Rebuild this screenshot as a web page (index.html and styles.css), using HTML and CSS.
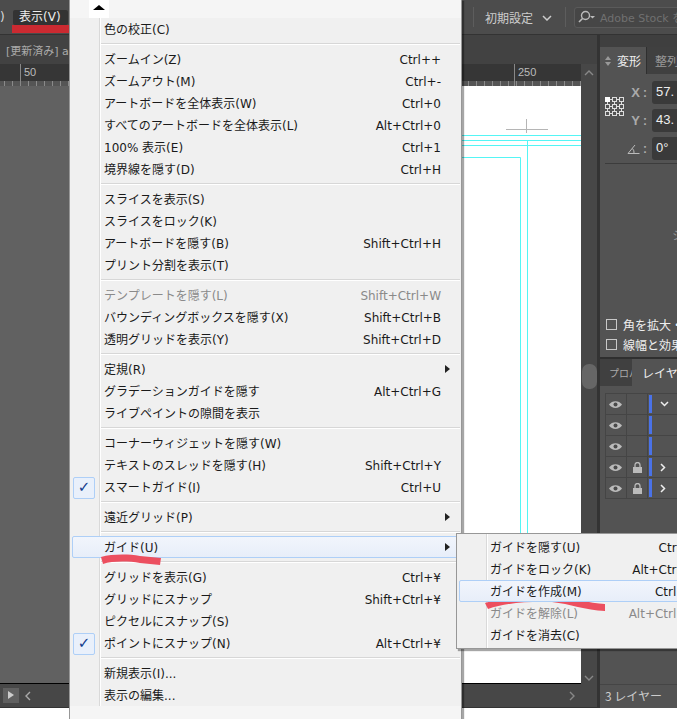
FILE: index.html
```html
<!DOCTYPE html>
<html lang="ja">
<head>
<meta charset="utf-8">
<title>表示メニュー</title>
<link rel="stylesheet" href="styles.css">
</head>
<body>
<div class="app">
  <header class="topbar">
    <span class="prev-menu">)</span>
    <span class="menu-title">表示(V)</span>
    <div class="top-right">
      <span class="vsep"></span>
      <span class="workspace">初期設定</span>
      <svg class="ws-chev" width="10" height="6" viewBox="0 0 10 6"><path d="M1 1l4 4 4-4" fill="none" stroke="#ccc" stroke-width="1.5"/></svg>
      <span class="vsep sep2"></span>
      <div class="search">
        <svg width="20" height="14" viewBox="0 0 20 14"><circle cx="7.5" cy="5.5" r="4" fill="none" stroke="#bbb" stroke-width="1.4"/><path d="M4.5 8.5L1 12" stroke="#bbb" stroke-width="1.6"/><path d="M12 6h5l-2.500 2.500z" fill="#bbb"/></svg>
        <span>Adobe Stock を</span>
      </div>
    </div>
  </header>
  <div class="tabbar"><span class="doc-tab">[更新済み] a</span></div>
  <div class="workarea">
    <div class="doc">
      <div class="doc-main">
        <div class="doc-left">
          <div class="ruler"><span class="r50">50</span><span class="r250">250</span></div>
          <div class="canvas">
            <div class="artboard">
              <svg class="guides" width="119" height="598" viewBox="0 0 119 598">
                <path d="M0 49.500H119M0 54.500H119M0 59.500H119M0 71.500H58.500V514M65.500 54.500V514" fill="none" stroke="#55f5f5" stroke-width="1"/>
                <path d="M44 43.500H86M64.500 33V47" fill="none" stroke="#b5b5b5" stroke-width="1"/>
              </svg>
            </div>
          </div>
        </div>
        <div class="vscroll">
          <svg width="10" height="6" viewBox="0 0 10 6"><path d="M1 5l4-4 4 4" fill="none" stroke="#888" stroke-width="1.400"/></svg>
          <span class="thumb"></span>
          <svg width="10" height="6" viewBox="0 0 10 6"><path d="M1 1l4 4 4-4" fill="none" stroke="#888" stroke-width="1.400"/></svg>
        </div>
      </div>
      <div class="hscroll">
        <span class="play"></span>
        <svg width="6" height="10" viewBox="0 0 6 10"><path d="M5 1L1 5l4 4" fill="none" stroke="#aaa" stroke-width="1.400"/></svg>
        <svg class="hs-right" width="6" height="10" viewBox="0 0 6 10"><path d="M1 1l4 4-4 4" fill="none" stroke="#888" stroke-width="1.400"/></svg>
      </div>
    </div>
    <aside class="panels">
      <div class="panel-strip"></div>
      <div class="panel-tabs">
        <span class="ptab active"><svg width="6" height="10" viewBox="0 0 6 10"><path d="M3 0l3 4H0zM3 10L0 6h6z" fill="#999"/></svg>変形</span>
        <span class="ptab dim">整列</span>
      </div>
      <div class="transform">
        <svg class="refpoint" width="19" height="19" viewBox="0 0 19 19">
          <g fill="none" stroke="#ddd"><rect x="7.500" y=".5" width="4" height="4"/><rect x="14.500" y=".5" width="4" height="4"/><rect x=".5" y="7.500" width="4" height="4"/><rect x="7.500" y="7.500" width="4" height="4"/><rect x="14.500" y="7.500" width="4" height="4"/><rect x=".5" y="14.500" width="4" height="4"/><rect x="7.500" y="14.500" width="4" height="4"/><rect x="14.500" y="14.500" width="4" height="4"/><path d="M5 2.500h2M12 2.500h2M5 9.500h2M12 9.500h2M5 16.500h2M12 16.500h2M2.500 5v2M9.500 5v2M16.500 5v2M2.500 12v2M9.500 12v2M16.500 12v2"/></g>
          <rect x="0" y="0" width="5" height="5" fill="#fff"/>
        </svg>
        <div class="fields">
          <div class="field"><label>X</label><i>:</i><span class="input">57.</span></div>
          <div class="field"><label>Y</label><i>:</i><span class="input">43.</span></div>
          <div class="field"><svg width="13" height="10" viewBox="0 0 13 10"><path d="M1 9.500H12.500M1 9.500L8 1M7 9.500a6 6 0 0 0-1.500-5" fill="none" stroke="#bbb"/></svg><i>:</i><span class="input">0°</span></div>
        </div>
      </div>
      <div class="hint"><span>シ</span></div>
      <div class="checks">
        <div class="check"><span class="box"></span>角を拡大・</div>
        <div class="check"><span class="box"></span>線幅と効果</div>
      </div>
      <div class="layer-tabs">
        <span class="ltab">プロパ</span>
        <span class="ltab active">レイヤー</span>
      </div>
      <div class="layers">
        <div class="lrow"><svg class="eye" width="13" height="9" viewBox="0 0 13 9"><path d="M0 4.500C3 0 10 0 13 4.500 10 9 3 9 0 4.500z" fill="#bbb"/><circle cx="6.500" cy="4.500" r="2" fill="#4a4a4a"/></svg><span class="lock-cell"></span><span class="color"></span><svg class="chev" width="9" height="6" viewBox="0 0 9 6"><path d="M1 1l3.500 3.500L8 1" fill="none" stroke="#eee" stroke-width="1.500"/></svg></div>
        <div class="lrow"><svg class="eye" width="13" height="9" viewBox="0 0 13 9"><path d="M0 4.500C3 0 10 0 13 4.500 10 9 3 9 0 4.500z" fill="#bbb"/><circle cx="6.500" cy="4.500" r="2" fill="#4a4a4a"/></svg><span class="lock-cell"></span><span class="color"></span></div>
        <div class="lrow"><svg class="eye" width="13" height="9" viewBox="0 0 13 9"><path d="M0 4.500C3 0 10 0 13 4.500 10 9 3 9 0 4.500z" fill="#bbb"/><circle cx="6.500" cy="4.500" r="2" fill="#4a4a4a"/></svg><span class="lock-cell"></span><span class="color"></span></div>
        <div class="lrow"><svg class="eye" width="13" height="9" viewBox="0 0 13 9"><path d="M0 4.500C3 0 10 0 13 4.500 10 9 3 9 0 4.500z" fill="#bbb"/><circle cx="6.500" cy="4.500" r="2" fill="#4a4a4a"/></svg><span class="lock-cell"><svg width="9" height="11" viewBox="0 0 9 11"><path d="M2 5V3a2.500 2.500 0 0 1 5 0v2" fill="none" stroke="#bbb" stroke-width="1.300"/><rect y="5" width="9" height="6" fill="#bbb"/></svg></span><span class="color"></span><svg class="chev" width="6" height="9" viewBox="0 0 6 9"><path d="M1 1l3.500 3.500L1 8" fill="none" stroke="#eee" stroke-width="1.500"/></svg></div>
        <div class="lrow"><svg class="eye" width="13" height="9" viewBox="0 0 13 9"><path d="M0 4.500C3 0 10 0 13 4.500 10 9 3 9 0 4.500z" fill="#bbb"/><circle cx="6.500" cy="4.500" r="2" fill="#4a4a4a"/></svg><span class="lock-cell"><svg width="9" height="11" viewBox="0 0 9 11"><path d="M2 5V3a2.500 2.500 0 0 1 5 0v2" fill="none" stroke="#bbb" stroke-width="1.300"/><rect y="5" width="9" height="6" fill="#bbb"/></svg></span><span class="color"></span><svg class="chev" width="6" height="9" viewBox="0 0 6 9"><path d="M1 1l3.500 3.500L1 8" fill="none" stroke="#eee" stroke-width="1.500"/></svg></div>
      </div>
      <div class="layer-foot">3 レイヤー</div>
    </aside>
  </div>
  <div class="desk"></div>
</div>

<nav class="menu main-menu">
  <div class="scroll-up"><span class="up-cell"><span class="up-arrow"></span></span></div>
  <ul class="items">
    <li class="item"><span>色の校正(C)</span></li>
    <li class="sep"></li>
    <li class="item"><span>ズームイン(Z)</span><kbd>Ctrl++</kbd></li>
    <li class="item"><span>ズームアウト(M)</span><kbd>Ctrl+-</kbd></li>
    <li class="item"><span>アートボードを全体表示(W)</span><kbd>Ctrl+0</kbd></li>
    <li class="item"><span>すべてのアートボードを全体表示(L)</span><kbd>Alt+Ctrl+0</kbd></li>
    <li class="item"><span>100% 表示(E)</span><kbd>Ctrl+1</kbd></li>
    <li class="item"><span>境界線を隠す(D)</span><kbd>Ctrl+H</kbd></li>
    <li class="sep"></li>
    <li class="item"><span>スライスを表示(S)</span></li>
    <li class="item"><span>スライスをロック(K)</span></li>
    <li class="item"><span>アートボードを隠す(B)</span><kbd>Shift+Ctrl+H</kbd></li>
    <li class="item"><span>プリント分割を表示(T)</span></li>
    <li class="sep"></li>
    <li class="item disabled"><span>テンプレートを隠す(L)</span><kbd>Shift+Ctrl+W</kbd></li>
    <li class="item"><span>バウンディングボックスを隠す(X)</span><kbd>Shift+Ctrl+B</kbd></li>
    <li class="item"><span>透明グリッドを表示(Y)</span><kbd>Shift+Ctrl+D</kbd></li>
    <li class="sep"></li>
    <li class="item sub"><span>定規(R)</span></li>
    <li class="item"><span>グラデーションガイドを隠す</span><kbd>Alt+Ctrl+G</kbd></li>
    <li class="item"><span>ライブペイントの隙間を表示</span></li>
    <li class="sep"></li>
    <li class="item"><span>コーナーウィジェットを隠す(W)</span></li>
    <li class="item"><span>テキストのスレッドを隠す(H)</span><kbd>Shift+Ctrl+Y</kbd></li>
    <li class="item checked"><span>スマートガイド(I)</span><kbd>Ctrl+U</kbd></li>
    <li class="sep"></li>
    <li class="item sub"><span>遠近グリッド(P)</span></li>
    <li class="sep"></li>
    <li class="item sub hot"><span>ガイド(U)</span></li>
    <li class="sep"></li>
    <li class="item"><span>グリッドを表示(G)</span><kbd>Ctrl+¥</kbd></li>
    <li class="item"><span>グリッドにスナップ</span><kbd>Shift+Ctrl+¥</kbd></li>
    <li class="item"><span>ピクセルにスナップ(S)</span></li>
    <li class="item checked"><span>ポイントにスナップ(N)</span><kbd>Alt+Ctrl+¥</kbd></li>
    <li class="sep"></li>
    <li class="item"><span>新規表示(I)...</span></li>
    <li class="item"><span>表示の編集...</span></li>
  </ul>
</nav>

<nav class="menu sub-menu">
  <ul class="items">
    <li class="item"><span>ガイドを隠す(U)</span><kbd>Ctrl+;</kbd></li>
    <li class="item"><span>ガイドをロック(K)</span><kbd>Alt+Ctrl+;</kbd></li>
    <li class="item hot"><span>ガイドを作成(M)</span><kbd>Ctrl+5</kbd></li>
    <li class="item disabled"><span>ガイドを解除(L)</span><kbd>Alt+Ctrl+5</kbd></li>
    <li class="item"><span>ガイドを消去(C)</span></li>
  </ul>
</nav>

<svg class="marks" width="677" height="719" viewBox="0 0 677 719">
  <rect x="12" y="25" width="57" height="8" fill="#cb2a31"/>
  <path d="M101 557C112 554 128 554 140 556L161 558 160 565 140 563C128 561 112 561 103 564z" fill="#ec4f5f"/>
  <path d="M485 603C500 598 530 596 552 597 570 598 590 603 605 604L605 611C585 610 570 604 552 602 530 601 505 603 488 609z" fill="#ec4f5f"/>
</svg>
</body>
</html>
```

FILE: styles.css
```css
* { box-sizing: border-box; }
html, body { margin: 0; padding: 0; }
body {
  position: relative;
  width: 677px;
  height: 719px;
  overflow: hidden;
  background: #fff;
  font-family: "DejaVu Sans", "Noto Sans CJK JP", sans-serif;
  font-size: 12px;
}
ul { list-style: none; margin: 0; padding: 0; }

.app { display: flex; flex-direction: column; height: 719px; background: #fff; }

.topbar {
  height: 35px;
  flex: none;
  display: flex;
  align-items: center;
  background: #4c4c4c;
  border-bottom: 1px solid #333;
  color: #eee;
}
.prev-menu { width: 13px; color: #ddd; }
.menu-title {
  width: 55px;
  height: 15px;
  line-height: 15px;
  padding-left: 6px;
  background: #333;
  border-radius: 2px;
  color: #eee;
  white-space: nowrap;
}
.top-right { margin-left: auto; display: flex; align-items: center; width: 204px; flex: none; }
.vsep { width: 1px; height: 20px; background: #5d5d5d; margin-right: 11px; flex: none; }
.workspace { color: #ccc; width: 48px; flex: none; white-space: nowrap; font-size: 12px; }
.ws-chev { margin: 2px 0 0 9px; flex: none; }
.sep2 { margin: 0 8px 0 13px; }
.search {
  flex: none;
  width: 120px;
  height: 21px;
  display: flex;
  align-items: center;
  gap: 2px;
  padding-left: 3px;
  background: #464646;
  border: 1px solid #5a5a5a;
  border-radius: 3px;
  color: #707070;
  font-size: 11px;
  white-space: nowrap;
}

.tabbar { height: 29px; flex: none; background: #424242; display: flex; align-items: center; padding-left: 6px; }
.doc-tab { color: #aaa; font-size: 11px; white-space: nowrap; }

.workarea { flex: 1; display: flex; min-height: 0; }
.doc { width: 597px; flex: none; display: flex; flex-direction: column; }
.doc-main { flex: 1; display: flex; min-height: 0; }
.doc-left { flex: 1; display: flex; flex-direction: column; }

.ruler {
  position: relative;
  height: 22px;
  flex: none;
  background:
    repeating-linear-gradient(90deg, #8a8a8a 0 1px, transparent 1px 8px) 4px 17px / 100% 5px no-repeat,
    linear-gradient(#363636 0 17px, #555 17px 22px);
  color: #bbb;
  font-family: "Liberation Sans", sans-serif;
  font-size: 11px;
  line-height: 16px;
}
.r50, .r250 { position: absolute; top: 0; height: 22px; padding-left: 3px; border-left: 1px solid #888; }
.r50 { left: 20px; }
.r250 { left: 514px; }

.canvas { flex: 1; display: flex; justify-content: flex-end; background: #616161; min-height: 0; border-bottom: 1px solid #000; }
.artboard { width: 119px; background: #fff; overflow: hidden; }
.guides { display: block; }

.vscroll {
  width: 16px;
  flex: none;
  position: relative;
  display: flex;
  flex-direction: column;
  align-items: center;
  justify-content: space-between;
  padding: 6px 0 3px;
  background: #474747;
}
.thumb { position: absolute; top: 300px; left: 1px; width: 15px; height: 25px; border-radius: 7px; background: #666; }

.hscroll {
  height: 24px;
  flex: none;
  display: flex;
  align-items: center;
  gap: 6px;
  padding: 0 3px;
  background: #474747;
  border-bottom: 1px solid #333;
}
.play { width: 16px; height: 15px; background: #606060; position: relative; }
.play::after {
  content: "";
  position: absolute;
  left: 5px;
  top: 3px;
  border-left: 6px solid #ccc;
  border-top: 4.500px solid transparent;
  border-bottom: 4.500px solid transparent;
}
.hs-right { margin-left: auto; margin-right: 19px; }

.panels {
  flex: 1;
  min-width: 0;
  display: flex;
  flex-direction: column;
  align-self: flex-start;
  padding-left: 3px;
  background: #333;
  overflow: hidden;
  height: 673px;
  margin-top: -29px;
  color: #ddd;
  position: relative;
}
.panel-strip { height: 12px; flex: none; background: #3f3f3f; }
.panel-tabs { height: 27px; flex: none; display: flex; align-items: center; background: #404040; white-space: nowrap; font-family: "Noto Sans CJK JP", sans-serif; }
.ptab { display: flex; align-items: center; gap: 6px; height: 27px; padding-left: 5px; width: 47px; color: #eee; flex: none; }
.ptab.active { background: #535353; border-right: 1px solid #2f2f2f; }
.ptab.dim { color: #999; padding-left: 8px; }

.transform { display: flex; flex: none; height: 90px; background: #535353; padding: 7px 0 0 5px; position: relative; }
.refpoint { flex: none; margin: 16px 0 0 0; }
.fields { display: flex; flex-direction: column; gap: 5px; margin-left: 3px; flex: none; }
.field { display: flex; align-items: center; height: 23px; gap: 3px; color: #aaa; font-family: "Liberation Sans", sans-serif; font-weight: bold; font-size: 13px; }
.field i { font-style: normal; font-size: 12px; width: 5px; }
.field label { width: 13px; text-align: right; }
.field svg { width: 13px; flex: none; }
.input { width: 40px; height: 23px; line-height: 22px; padding-left: 4px; margin-left: 1px; background: #3a3a3a; border-radius: 3px; color: #eee; font-weight: normal; font-size: 13px; }
.transform::after { content: ""; position: absolute; left: 5px; right: 0; bottom: 0; height: 1px; background: #3c3c3c; }

.hint { height: 148px; flex: none; background: #535353; color: #999; padding: 62px 0 0 72px; }
.checks { height: 47px; flex: none; background: #535353; padding: 4px 0 0 6px; border-bottom: 2px solid #2f2f2f; display: flex; flex-direction: column; gap: 3px; font-family: "Noto Sans CJK JP", sans-serif; }
.check { display: flex; align-items: center; gap: 6px; height: 17px; color: #eee; white-space: nowrap; }
.box { width: 11px; height: 11px; border: 1px solid #c8c8c8; flex: none; }

.layer-tabs { height: 27px; flex: none; display: flex; background: #404040; white-space: nowrap; align-items: stretch; font-family: "Noto Sans CJK JP", sans-serif; }
.ltab { display: flex; align-items: center; padding-left: 10px; flex: none; }
.ltab:first-child { width: 32px; overflow: hidden; color: #aaa; font-size: 10px; padding-left: 9px; }
.ltab.active { background: #535353; color: #eee; }

.layers { flex: 1; background: #535353; padding: 7px 0 0 5px; min-height: 0; }
.lrow { display: flex; align-items: center; height: 21px; border-bottom: 1px solid #454545; border-left: 1px solid #454545; width: 72px; }
.lrow:first-child { border-top: 1px solid #454545; height: 22px; }
.eye { margin-left: 3px; flex: none; }
.lock-cell { width: 22px; height: 100%; margin-left: 4px; border-left: 1px solid #454545; border-right: 1px solid #454545; display: flex; align-items: center; justify-content: center; flex: none; }
.color { width: 3px; height: 18px; margin-left: 1px; background: #4a72e8; flex: none; }
.chev { margin-left: 8px; flex: none; }

.layer-foot { height: 24px; flex: none; line-height: 22px; padding-left: 5px; background: #535353; color: #ccc; border-top: 1px solid #454545; white-space: nowrap; font-family: "Noto Sans CJK JP", sans-serif; }

.desk { height: 11px; flex: none; background: #fff; }

.menu {
  position: absolute;
  background: #f0f0f0;
  border: 1px solid #979797;
  box-shadow: 2px 2px 1px rgba(0, 0, 0, .35);
  color: #1a1a1a;
  white-space: nowrap;
}
.main-menu { left: 69px; top: -1px; width: 393px; height: 722px; }
.sub-menu { left: 456px; top: 533px; width: 260px; height: 116px; padding-top: 2px; }

.scroll-up { height: 18px; background: #f5f5f5; padding-left: 19px; }
.up-cell { display: block; width: 20px; height: 18px; background: #fff; position: relative; }
.up-arrow {
  position: absolute;
  left: 4px;
  top: 5px;
  border-bottom: 5px solid #000;
  border-left: 6px solid transparent;
  border-right: 6px solid transparent;
}
.items { position: relative; background: #f0f0f0; }
.main-menu .items::before { content: ""; position: absolute; left: 29px; top: 0; bottom: 0; width: 2px; background: linear-gradient(90deg, #d9d9d9 50%, #fff 50%); }
.sub-menu .items::before { content: ""; position: absolute; left: 29px; top: -2px; bottom: -2px; width: 2px; background: linear-gradient(90deg, #d9d9d9 50%, #fff 50%); }
.main-menu::after { content: ""; display: block; height: 16px; background: #f5f5f5; }

.item {
  position: relative;
  display: flex;
  justify-content: space-between;
  align-items: center;
  height: 22px;
  line-height: 20px;
  padding: 2px 20px 0 34px;
  font-size: 12px;
}
.sub-menu .item { padding-left: 33px; padding-right: 21px; }
kbd { font: inherit; letter-spacing: 0; }
.disabled { color: #8a8a8a; }
.item.hot {
  background: linear-gradient(#f1f5fc, #e7eef9);
  border: 1px solid #aecff7;
  border-radius: 2px;
  margin: 0 0 0 2px;
  padding-left: 31px;
  padding-top: 1px;
}
.sub-menu .item.hot { margin-left: 2px; padding-left: 30px; padding-right: 20px; z-index: 1; }
.sep { height: 8px; position: relative; }
.sep::after { content: ""; position: absolute; left: 31px; right: 1px; top: 3px; height: 2px; background: linear-gradient(#d7d7d7 50%, #fff 50%); }

.sub::after {
  content: "";
  position: absolute;
  left: 375px;
  top: 7px;
  border-left: 5px solid #222;
  border-top: 4px solid transparent;
  border-bottom: 4px solid transparent;
}
.hot.sub::after { left: 372px; top: 6px; }
.checked::before {
  content: "✓";
  position: absolute;
  left: 3px;
  top: 1px;
  width: 20px;
  height: 20px;
  background: #e9f0fb;
  border: 1px solid #aecff7;
  border-radius: 2px;
  color: #123c8c;
  font-family: "DejaVu Sans", sans-serif;
  font-weight: bold;
  font-size: 15px;
  line-height: 18px;
  text-align: center;
}

.marks { position: absolute; left: 0; top: 0; pointer-events: none; }
```
